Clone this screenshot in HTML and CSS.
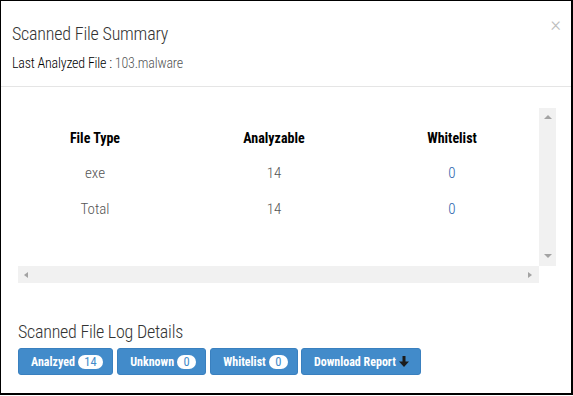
FILE: index.html
```html
<!DOCTYPE html>
<html>
<head>
<meta charset="utf-8">
<link rel="stylesheet" href="styles.css">
</head>
<body>
<div class="modal">
  <div class="modal-header">
    <button class="close" type="button">×</button>
    <h4 class="modal-title">Scanned File Summary</h4>
    <p class="last-file">Last Analyzed File : <span class="file-name">103.malware</span></p>
  </div>
  <div class="modal-body">
    <div class="scroll-box">
      <div class="scroll-main">
        <div class="viewport">
          <table class="summary">
            <thead>
              <tr><th>File Type</th><th>Analyzable</th><th>Whitelist</th></tr>
            </thead>
            <tbody>
              <tr><td>exe</td><td>14</td><td><a class="link">0</a></td></tr>
              <tr><td>Total</td><td>14</td><td><a class="link">0</a></td></tr>
            </tbody>
          </table>
        </div>
        <div class="vbar"><span class="tri tri-up"></span><span class="tri tri-down"></span></div>
      </div>
      <div class="scroll-foot">
        <div class="hbar"><span class="tri tri-left"></span><span class="tri tri-right"></span></div>
        <div class="corner"></div>
      </div>
    </div>
    <h4 class="log-title">Scanned File Log Details</h4>
    <div class="btn-row">
      <button class="btn" type="button">Analzyed<span class="badge">14</span></button>
      <button class="btn" type="button">Unknown<span class="badge">0</span></button>
      <button class="btn" type="button">Whitelist<span class="badge">0</span></button>
      <button class="btn btn-dl" type="button">Download Report<svg class="dl-icon" width="10" height="11" viewBox="0 0 10 11"><path d="M3.5 0h3v5.5H10L5 11 0 5.5h3.5z" fill="#1c1c1c"/></svg></button>
    </div>
  </div>
</div>
</body>
</html>
```
FILE: styles.css
```css
* { box-sizing: border-box; }
html, body { margin: 0; padding: 0; background: #fff; }
body { font-family: "Roboto Condensed", Roboto, sans-serif; color: #333; }

.modal {
  position: relative;
  width: 573px;
  height: 395px;
  border: 1px solid #000;
  border-right-width: 2px;
  border-bottom-width: 2px;
  background: #fff;
}

.modal-header {
  padding: 22px 11px 13px;
  border-bottom: 1px solid #e5e5e5;
}
.close {
  position: absolute;
  top: 13px;
  right: 10px;
  padding: 0;
  border: 0;
  background: none;
  font-family: "Roboto", sans-serif;
  font-weight: 300;
  font-size: 20px;
  line-height: 20px;
  color: #bdbdbd;
}
.modal-title {
  margin: 0;
  font-size: 18px;
  letter-spacing: -0.2px;
  line-height: 22px;
  font-weight: 300;
  color: #333;
}
.last-file {
  margin: 9px 0 0;
  font-size: 14px;
  letter-spacing: -0.2px;
  line-height: 19px;
  font-weight: 300;
  color: #000;
}
.file-name { color: #555; }

.modal-body { padding: 21px 17px 0; }

.scroll-box { width: 538px; }
.scroll-main { display: flex; height: 158px; }
.viewport { flex: 1; overflow: hidden; }
.vbar {
  width: 17px;
  background: #f1f1f1;
  display: flex;
  flex-direction: column;
  justify-content: space-between;
  align-items: center;
  padding: 7px 0 8px;
}
.scroll-foot { display: flex; height: 17px; }
.hbar {
  flex: 1;
  background: #f1f1f1;
  display: flex;
  justify-content: space-between;
  align-items: center;
  padding: 0 7px 0 6px;
}
.corner { width: 17px; background: #fff; }

.tri { width: 0; height: 0; display: block; }
.tri-up { border-left: 4px solid transparent; border-right: 4px solid transparent; border-bottom: 4px solid #a3a3a3; }
.tri-down { border-left: 4px solid transparent; border-right: 4px solid transparent; border-top: 4px solid #a3a3a3; }
.tri-left { border-top: 3.5px solid transparent; border-bottom: 3.5px solid transparent; border-right: 4px solid #a3a3a3; }
.tri-right { border-top: 3.5px solid transparent; border-bottom: 3.5px solid transparent; border-left: 4px solid #a3a3a3; }

.summary {
  margin-top: 11px;
  border-collapse: collapse;
  table-layout: fixed;
  width: 510px;
}
.summary th, .summary td {
  height: 36px;
  padding: 0;
  text-align: center;
  vertical-align: middle;
}
.summary th:nth-child(1) { width: 154px; }
.summary th:nth-child(2) { width: 204px; }
.summary th:nth-child(3) { width: 152px; }
.summary th {
  font-size: 14px;
  font-weight: 700;
  color: #000;
  padding-top: 1px;
}
.summary td {
  font-size: 15px;
  font-weight: 300;
  color: #555;
}
.link { color: #2a64ad; }

.log-title {
  margin: 38px 0 0;
  font-size: 18px;
  letter-spacing: -0.25px;
  line-height: 22px;
  font-weight: 300;
  color: #333;
}
.btn-row { display: flex; gap: 4px; margin-top: 5px; }
.btn {
  display: inline-flex;
  align-items: center;
  gap: 3px;
  height: 27px;
  padding: 0 9px 0 12px;
  border: 1px solid #3a80bf;
  border-radius: 3px;
  background: #428bca;
  color: #fff;
  font-family: "Roboto Condensed", Roboto, sans-serif;
  font-size: 12px;
  font-weight: 700;
}
.btn-dl { padding-right: 11px; gap: 3px; margin-left: -1px; }
.badge {
  display: inline-block;
  height: 14px;
  line-height: 14px;
  padding: 0 6.5px;
  border-radius: 7px;
  background: #fff;
  color: #428bca;
  font-size: 12.5px;
  font-weight: 400;
}
.dl-icon { display: block; }
```
